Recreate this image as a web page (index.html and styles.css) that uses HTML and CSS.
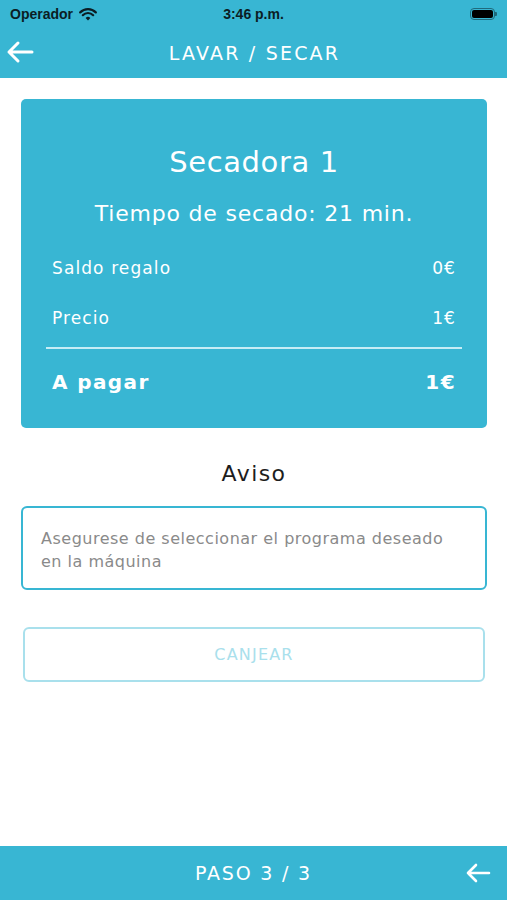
FILE: index.html
```html
<!DOCTYPE html>
<html lang="es">
<head>
<meta charset="utf-8">
<title>Lavar / Secar</title>
<link rel="stylesheet" href="styles.css">
</head>
<body>
<div class="app">
  <div class="top">
    <div class="status">
      <div class="status-left">
        <span class="carrier">Operador</span>
        <svg class="wifi" width="18" height="13" viewBox="0 0 18 13"><path d="M9 12.5 L6.6 9.9 A3.4 3.4 0 0 1 11.4 9.9 Z" fill="#0b1d24"/><path d="M3.8 7.2 A7.2 7.2 0 0 1 14.2 7.2" stroke="#0b1d24" stroke-width="2.2" fill="none" stroke-linecap="round"/><path d="M1.2 4.4 A11 11 0 0 1 16.8 4.4" stroke="#0b1d24" stroke-width="2.2" fill="none" stroke-linecap="round"/></svg>
      </div>
      <span class="time">3:46 p.m.</span>
      <div class="status-right">
        <div class="battery"><div class="battery-fill"></div></div>
        <div class="battery-tip"></div>
      </div>
    </div>
    <div class="navbar">
      <svg class="nav-back" width="28" height="24" viewBox="0 0 28 24"><path d="M26 12 H3 M12 3 L3 12 L12 21" stroke="#fff" stroke-width="3" fill="none" stroke-linecap="round" stroke-linejoin="round"/></svg>
      <span class="nav-title">LAVAR / SECAR</span>
    </div>
  </div>

  <main class="content">
    <section class="card">
      <h1 class="card-title">Secadora 1</h1>
      <p class="card-sub">Tiempo de secado: 21 min.</p>
      <div class="row"><span>Saldo regalo</span><span>0€</span></div>
      <div class="row"><span>Precio</span><span>1€</span></div>
      <div class="divider"></div>
      <div class="row total"><span>A pagar</span><span>1€</span></div>
    </section>

    <h2 class="notice-title">Aviso</h2>
    <div class="notice-box">Asegurese de seleccionar el programa deseado en la máquina</div>

    <button class="redeem">CANJEAR</button>
  </main>

  <footer class="footer">
    <span class="step">PASO 3 / 3</span>
    <svg class="footer-back" width="26" height="22" viewBox="0 0 26 22"><path d="M24 11 H3 M11 3 L3 11 L11 19" stroke="#fff" stroke-width="2.6" fill="none" stroke-linecap="round" stroke-linejoin="round"/></svg>
  </footer>
</div>
</body>
</html>
```

FILE: styles.css
```css
* { box-sizing: border-box; }
html, body { margin: 0; padding: 0; }
body {
  font-family: "DejaVu Sans", "Open Sans", sans-serif;
  background: #fff;
  color: #222;
}
.app {
  display: flex;
  flex-direction: column;
  height: 900px;
}
.top { background: #38b6d3; }
.status {
  height: 28px;
  display: flex;
  align-items: center;
  justify-content: space-between;
  padding: 0 10px 0 10px;
  position: relative;
}
.status-left { display: flex; align-items: center; gap: 6px; }
.carrier { font-size: 14px; font-weight: 600; color: #0b1d24; font-family: "Liberation Sans", sans-serif; }
.time {
  position: absolute;
  left: 0; right: 0;
  text-align: center;
  font-size: 14px;
  font-weight: 700;
  color: #0b1d24;
  font-family: "Liberation Sans", sans-serif;
  pointer-events: none;
}
.status-right { display: flex; align-items: center; }
.battery {
  width: 25px; height: 12px;
  border: 1px solid #1f6a7c;
  border-radius: 4px;
  padding: 1px;
}
.battery-fill { width: 100%; height: 100%; background: #000; border-radius: 2px; }
.battery-tip { width: 2px; height: 4px; background: #1f6a7c; border-radius: 0 1px 1px 0; }
.navbar {
  height: 50px;
  display: flex;
  align-items: center;
  justify-content: center;
  position: relative;
}
.nav-back { position: absolute; left: 6px; top: 12px; }
.nav-title { color: #fff; font-size: 19px; letter-spacing: 2.2px; margin-right: -2px; }

.content {
  flex: 1;
  padding: 21px 20px 0 21px;
  display: flex;
  flex-direction: column;
}
.card {
  background: #38b6d3;
  border-radius: 5px;
  height: 329px;
  padding: 41px 25px 0 25px;
  color: #fff;
}
.card-title {
  margin: 0;
  text-align: center;
  font-weight: 400;
  font-size: 29px;
  letter-spacing: 0.6px;
  line-height: 44px;
}
.card-sub {
  margin: 15px 0 24px;
  text-align: center;
  font-size: 22px;
  letter-spacing: 0.8px;
  line-height: 30px;
}
.row {
  display: flex;
  justify-content: space-between;
  padding: 0 6px;
  font-size: 17px;
  letter-spacing: 1.1px;
  line-height: 30px;
  margin-bottom: 20px;
}
.divider {
  height: 2px;
  background: #c6edf6;
  margin: -6px 0 18px;
}
.row.total { font-size: 20px; font-weight: 700; letter-spacing: 1.4px; }

.notice-title {
  margin: 31px 0 0;
  text-align: center;
  font-weight: 400;
  font-size: 22px;
  letter-spacing: 1.4px;
  line-height: 30px;
  color: #1d1d1d;
}
.notice-box {
  margin-top: 17px;
  height: 84px;
  border: 2px solid #38b6d3;
  border-radius: 6px;
  padding: 19px 18px 0 18px;
  font-size: 16px;
  letter-spacing: 0.5px;
  line-height: 23px;
  color: #8a8a8a;
}
.redeem {
  margin: 37px 2px 0 2px;
  height: 55px;
  border: 2px solid #a9e0ec;
  border-radius: 6px;
  background: #fff;
  color: #a9e0ec;
  font-family: inherit;
  font-size: 16px;
  letter-spacing: 1.2px;
}
.footer {
  height: 54px;
  background: #38b6d3;
  display: flex;
  align-items: center;
  justify-content: center;
  position: relative;
}
.step { color: #fff; font-size: 19px; letter-spacing: 1.8px; }
.footer-back { position: absolute; right: 16px; top: 16px; }
```
